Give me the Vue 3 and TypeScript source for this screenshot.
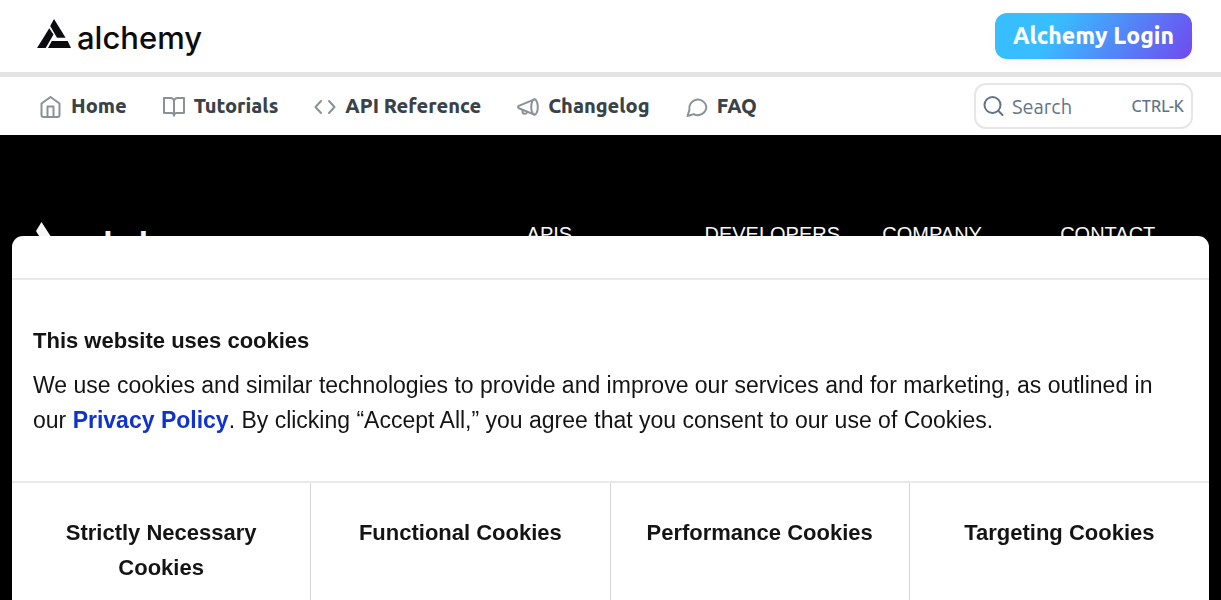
<script setup lang="ts">
interface NavItem {
  label: string
  icon: string
}

const navItems: NavItem[] = [
  { label: 'Home', icon: 'home' },
  { label: 'Tutorials', icon: 'book' },
  { label: 'API Reference', icon: 'code' },
  { label: 'Changelog', icon: 'megaphone' },
  { label: 'FAQ', icon: 'chat' },
]

const footerColumns: string[] = ['APIS', 'DEVELOPERS', 'COMPANY', 'CONTACT']

const cookieTypes: string[] = [
  'Strictly Necessary Cookies',
  'Functional Cookies',
  'Performance Cookies',
  'Targeting Cookies',
]
</script>

<template>
  <div class="page">
    <header class="topbar">
      <a class="brand" href="#" aria-label="alchemy">
        <svg class="brand-mark" viewBox="0 0 34 30" aria-hidden="true">
          <path d="M17 0 28.600 18.700H20L13.200 7z" />
          <path d="M12.300 9.300 16.500 15.500 8.700 29H0z" />
          <path d="M14.800 22H30.700L34 29H11z" />
        </svg>
        <span class="brand-name">alchemy</span>
      </a>
      <a class="login" href="#">Alchemy Login</a>
    </header>

    <div class="navbar">
      <nav class="nav">
        <a v-for="item in navItems" :key="item.label" class="nav-link" href="#">
          <svg class="nav-icon" viewBox="0 0 22 22" aria-hidden="true">
            <template v-if="item.icon === 'home'">
              <path d="M1.500 7.500 10.500 1l9 6.500v11.500a2 2 0 0 1-2 2h-14a2 2 0 0 1-2-2z" />
              <path d="M7.500 21V10.500h6V21" />
            </template>
            <template v-else-if="item.icon === 'book'">
              <path d="M1 2h6.500a3.500 3.500 0 0 1 3.500 3.500v14a2.500 2.500 0 0 0-2.500-2.500H1z" />
              <path d="M21 2h-6.500a3.500 3.500 0 0 0-3.500 3.500v14a2.500 2.500 0 0 1 2.500-2.500H21z" />
            </template>
            <template v-else-if="item.icon === 'code'">
              <path d="M7 5 1.500 11 7 17M15 5l5.500 6-5.500 6" />
            </template>
            <template v-else-if="item.icon === 'megaphone'">
              <ellipse cx="17.500" cy="11" rx="3.300" ry="7.700" />
              <path d="M17.500 3.300 1.800 9.800c-1 .5-1 2 0 2.400l15.700 6.500" />
              <path d="M5.500 14v1.500a2.300 2.300 0 0 0 4.500.7" />
            </template>
            <template v-else>
              <path d="M20.300 10.500a8.500 8.500 0 0 1-12.600 7.600L1.500 20l1.900-6A8.600 8.600 0 1 1 20.300 10.500z" />
            </template>
          </svg>
          <span>{{ item.label }}</span>
        </a>
      </nav>
      <button class="search" type="button">
        <svg class="search-icon" viewBox="0 0 22 22" aria-hidden="true">
          <circle cx="9.500" cy="10" r="8" />
          <path d="m15.500 16 4 4" />
        </svg>
        <span class="search-label">Search</span>
        <kbd class="search-key">CTRL-K</kbd>
      </button>
    </div>

    <footer class="footer">
      <a class="footer-brand" href="#" aria-label="alchemy">
        <svg class="footer-mark" viewBox="0 0 30 36" aria-hidden="true">
          <path d="M5.500 0 26 32H14L0 9z" />
        </svg>
        <span class="footer-name">alchemy</span>
      </a>
      <h2 v-for="title in footerColumns" :key="title" class="footer-title">{{ title }}</h2>
    </footer>

    <section class="consent" role="dialog" aria-labelledby="consent-title">
      <div class="consent-head"></div>
      <div class="consent-body">
        <h2 id="consent-title" class="consent-title">This website uses cookies</h2>
        <p class="consent-text">
          We use cookies and similar technologies to provide and improve our services and for
          marketing, as outlined in our <a class="policy" href="#">Privacy Policy</a>. By clicking
          “Accept All,” you agree that you consent to our use of Cookies.
        </p>
      </div>
      <ul class="types">
        <li v-for="name in cookieTypes" :key="name" class="type">{{ name }}</li>
      </ul>
    </section>
  </div>
</template>

<style>
body {
  margin: 0;
}
</style>

<style scoped>
.page {
  display: flex;
  flex-direction: column;
  min-height: 100vh;
  overflow-x: hidden;
  background: #000;
  font-family: Ubuntu, "Noto Sans", sans-serif;
}

.topbar {
  display: flex;
  align-items: center;
  justify-content: space-between;
  box-sizing: border-box;
  height: 77px;
  padding: 0 29px 0 37px;
  border-bottom: 5px solid #e3e3e3;
  background: #fff;
}

.brand {
  display: flex;
  align-items: center;
  gap: 6px;
  color: #0c0c0e;
  text-decoration: none;
}

.brand-mark {
  width: 34px;
  height: 30px;
  margin-bottom: 4px;
  fill: currentColor;
}

.brand-name {
  margin-top: 4px;
  font: 500 31px/40px Inter, sans-serif;
}

.login {
  padding: 0 18px;
  border-radius: 12px;
  background: linear-gradient(120deg, #38bdff 30%, #704aef 100%);
  box-shadow: 0 4px 12px rgba(0, 0, 0, 0.04);
  color: #fff;
  font-size: 23px;
  font-weight: 800;
  line-height: 46px;
  text-decoration: none;
}

.navbar {
  display: flex;
  align-items: center;
  justify-content: space-between;
  box-sizing: border-box;
  height: 58px;
  padding: 0 28px 0 40px;
  background: #fff;
}

.nav {
  display: flex;
  gap: 36px;
}

.nav-link {
  display: flex;
  align-items: center;
  gap: 9px;
  color: #384248;
  font-size: 20px;
  font-weight: 800;
  line-height: 28px;
  text-decoration: none;
  white-space: nowrap;
}

.nav-icon {
  width: 22px;
  height: 22px;
  margin-top: 2px;
  fill: none;
  stroke: #8b9195;
  stroke-width: 2;
  stroke-linecap: round;
  stroke-linejoin: round;
}

.search {
  display: flex;
  align-items: center;
  width: 219px;
  height: 46px;
  padding: 0 7px;
  border: 2px solid #e6e6e8;
  border-radius: 12px;
  background: #fff;
  color: #637288;
  font-family: inherit;
}

.search-icon {
  width: 22px;
  height: 22px;
  margin-right: 7px;
  fill: none;
  stroke: currentColor;
  stroke-width: 2;
  stroke-linecap: round;
}

.search-label {
  font-size: 20px;
}

.search-key {
  margin-left: auto;
  font-family: inherit;
  font-size: 16px;
  font-weight: 500;
}

.footer {
  display: grid;
  grid-template-columns: minmax(0, 491fr) repeat(4, minmax(0, 178fr));
  flex: 1;
  align-items: start;
  box-sizing: border-box;
  padding: 86px 0 0 36px;
  margin-right: -17px;
  color: #f7f7f7;
}

.footer-brand {
  display: flex;
  gap: 12px;
  color: inherit;
  text-decoration: none;
}

.footer-mark {
  width: 30px;
  height: 36px;
  margin-top: 1px;
  fill: currentColor;
}

.footer-name {
  font: 500 43px/50px Inter, sans-serif;
}

.footer-title {
  margin: 0;
  font: 400 20px/26px "Liberation Sans", Arial, sans-serif;
}

.consent {
  position: fixed;
  top: 236px;
  right: 12px;
  bottom: 0;
  left: 12px;
  display: flex;
  flex-direction: column;
  overflow: hidden;
  border-radius: 11px 11px 0 0;
  background: #fff;
  color: #141414;
  font-family: "Liberation Sans", Arial, sans-serif;
}

.consent-head {
  flex: none;
  height: 42px;
  border-bottom: 2px solid #e9e9e9;
}

.consent-body {
  flex: none;
  padding: 43px 21px;
  border-bottom: 2px solid #e9e9e9;
}

.consent-title {
  margin: 0 0 10px;
  font-size: 22px;
  line-height: 35px;
}

.consent-text {
  margin: 0;
  font-size: 23px;
  line-height: 35px;
}

.policy {
  color: #1032cf;
  font-weight: 700;
  text-decoration: none;
}

.types {
  display: grid;
  grid-template-columns: repeat(4, 1fr);
  flex: 1;
  margin: 0;
  padding: 0;
  list-style: none;
}

.type {
  padding: 32px 32px;
  border-right: 1px solid #d6d6d6;
  font-size: 22px;
  font-weight: 700;
  line-height: 35px;
  text-align: center;
}

.type:last-child {
  border-right: 0;
}
</style>
